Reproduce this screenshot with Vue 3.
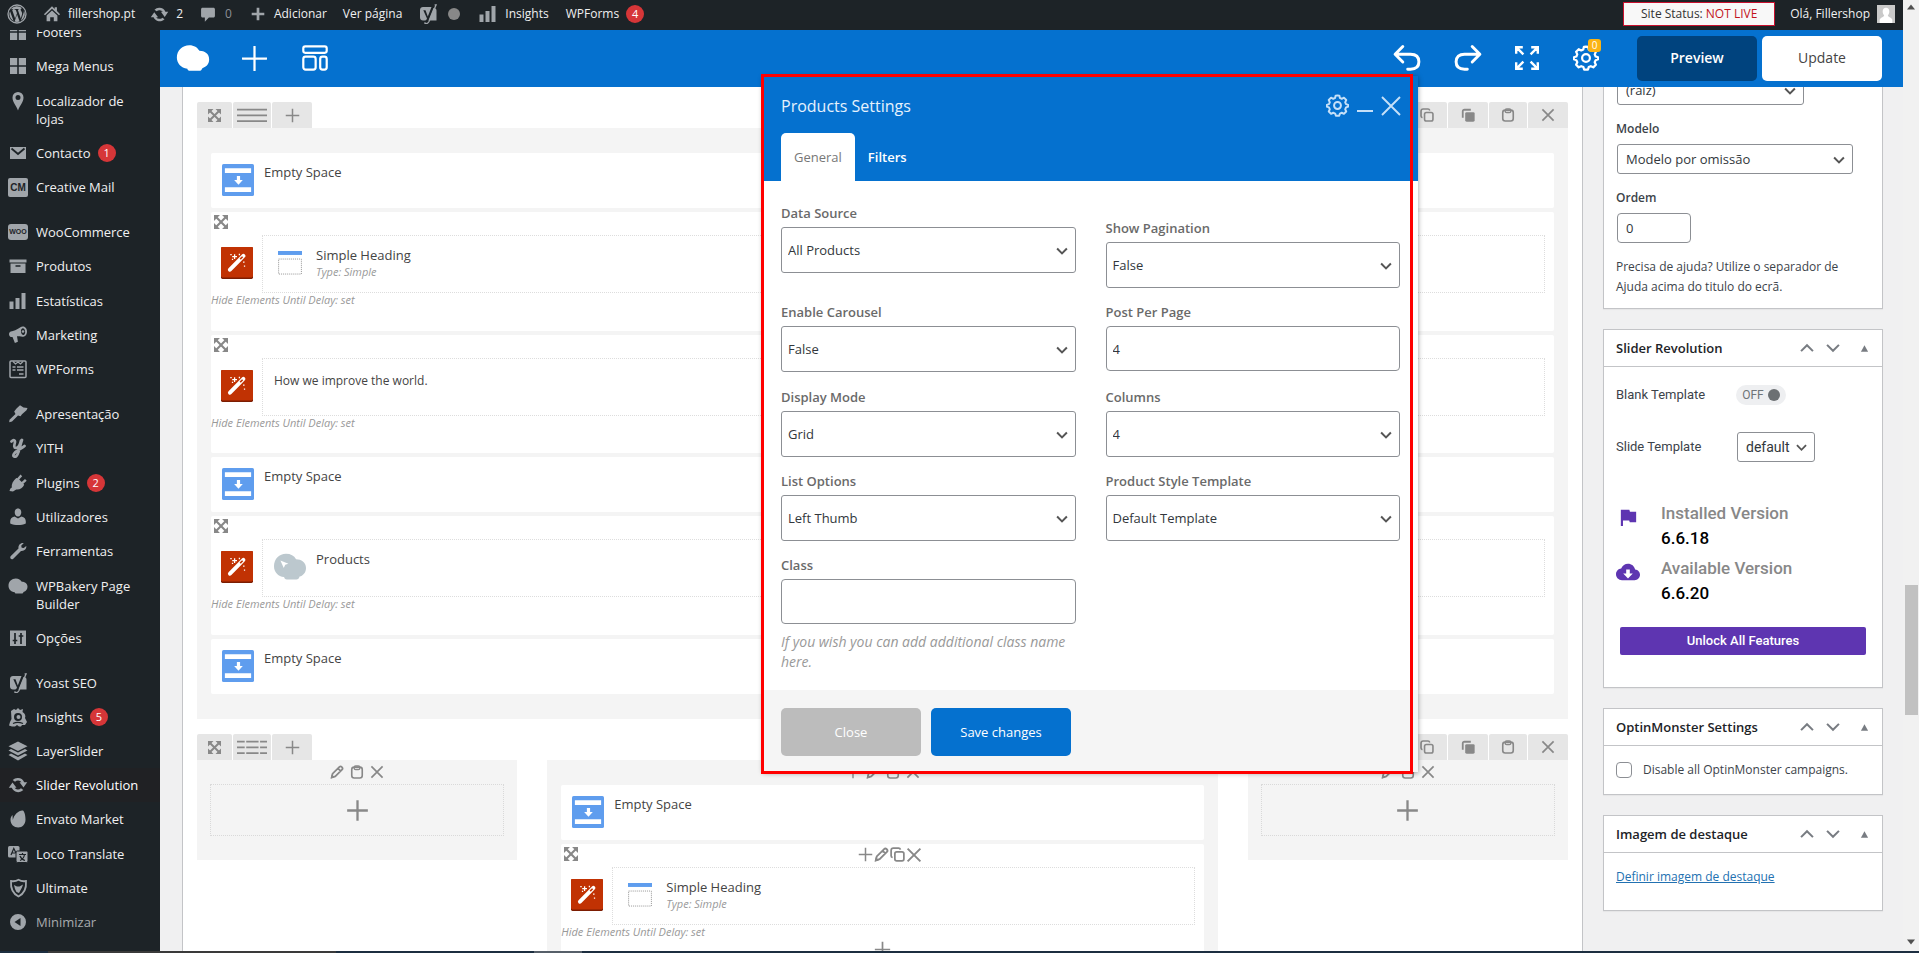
<script setup>
import { h, ref } from 'vue'

const glyphs = {
  wp: '<circle cx="10" cy="10" r="9" fill="none" stroke="currentColor" stroke-width="1.3"/><path fill="currentColor" d="M3 7.2l3.6 9.8A7.8 7.8 0 0 1 3 7.2zM10.1 10.6l2.5 6.9a7.8 7.8 0 0 1-5 .1zM16.9 6.3a7.8 7.8 0 0 1-3 10.4l2.4-6.9c.5-1.300.7-2.500.6-3.500zM3.700 5.200A7.800 7.800 0 0 1 15.200 4.300c-1.200 0-1.800 1-1.400 2 .6 1.200 1.800 2.200 1.100 4.500l-1.100 3.600-3-8.700 1-.1V5l-4.200.1v.6l1.100.1 1.300 3.500-1.900 5.300-3-8.800 1-.1V5z"/>',
  home: '<path fill="currentColor" d="M10 1.500l3 2.900V2.500h2.500v4.300l3.500 3.400-1.300 1.300L10 4.300 2.300 11.500 1 10.200zM10 6l6 5.600V18h-4v-4.500H8V18H4v-6.400z"/>',
  refresh: '<path fill="currentColor" d="M10 3c2.800 0 5.200 1.600 6.200 4.200h3L15.500 12.500l-4-5.300h2A4.300 4.300 0 0 0 7 6.700L4.700 5A7 7 0 0 1 10 3zM4.500 7.500l4 5.300h-2a4.300 4.300 0 0 0 6.500.5l2.300 1.700A7 7 0 0 1 3.800 12.800h-3z"/>',
  comment: '<path fill="currentColor" d="M4 3h12c1 0 1.700.7 1.700 1.700v7.600c0 1-.7 1.700-1.700 1.700h-5l-4.500 4.500V14H4c-1 0-1.700-.7-1.700-1.700V4.700C2.300 3.700 3 3 4 3z"/>',
  plusBold: '<path fill="currentColor" d="M8.500 3h3v5.500H17v3h-5.500V17h-3v-5.500H3v-3h5.500z"/>',
  yoast: '<path fill="currentColor" d="M5 3h8.500L9.800 12.500 7.500 6.300H5.300L9 14.500c-.5 1.500-1.300 2-2.500 2H5c-1.700 0-3-1.200-3-3V6c0-1.700 1.300-3 3-3z"/><path fill="currentColor" d="M15.500 4H16c1.400 0 2.500 1 2.500 2.500v10h-8z"/><path fill="none" stroke="currentColor" stroke-width="1.300" d="M16.600.8h1.500L11 17.500c-.8 1.700-2 2.400-4 2.200v-1.500"/>',
  bars: '<path fill="currentColor" d="M1.500 10.500h4V18h-4zM7.500 7h4v11h-4zM13.500 2h4v16h-4z"/>',
  grid: '<path fill="currentColor" d="M2 2h7.200v7.200H2zM10.800 2H18v7.200h-7.200zM2 10.800h7.200V18H2zM10.800 10.800H18V18h-7.200z"/>',
  pin: '<path fill="currentColor" fill-rule="evenodd" d="M10 1a5.500 5.500 0 0 1 5.500 5.500C15.500 11 12 14 10 19.500 8 14 4.500 11 4.500 6.500A5.500 5.500 0 0 1 10 1zm0 3a2.500 2.500 0 1 0 0 5 2.500 2.500 0 0 0 0-5z"/>',
  mail: '<path fill="currentColor" d="M2 4h16v12H2z"/><path d="M3.500 5.500L10 11l6.500-5.500" fill="none" stroke="#1d2327" stroke-width="1.800"/>',
  archive: '<path fill="currentColor" d="M1.500 3.500h17v3h-17zM2.500 7.500h15v9.500h-15z"/><path d="M7.500 10h5" stroke="#1d2327" stroke-width="1.500"/>',
  megaphone: '<path fill="currentColor" fill-rule="evenodd" d="M14.500 1.500c2.500-.5 4.500 2 4.500 5s-1.800 5.300-3.800 5.200c-1 0-3.600-.7-6.200-.5l.9 5.600-3 1.200-2.400-6C2.500 12.500 1 11 1 9.200 1 7.500 2 6.500 4 6.200c4.500-.7 8-4.300 10.500-4.700zm.2 1.800c-1.300.4-2 1.900-1.700 3.700.4 2 1.500 3.200 2.700 2.900 1.200-.3 1.700-2 1.400-3.700-.3-1.800-1.300-3.100-2.400-2.900z"/><circle cx="15" cy="6.500" r="1.300" fill="currentColor"/>',
  form: '<rect x="2" y="2" width="16" height="16.500" rx="1" fill="none" stroke="currentColor" stroke-width="1.500"/><path d="M5 2.500l2.500 2.500L10 3l2.500 2L15 2.500" fill="none" stroke="currentColor" stroke-width="1.200"/><path d="M4.500 8h3M9 8h6.500M4.500 11h3M9 11h6.500M11 15h4.500" stroke="currentColor" stroke-width="1.500"/>',
  brush: '<path fill="currentColor" d="M8.500 4.500L12 1.200l3.500 2.300 4 .5-1 2.300-4.500 4-1.500 2L10 11.500 4 17.500l-2.800.8.300-2.500L7.500 10 6.200 7.500z"/>',
  yith: '<path fill="none" stroke="currentColor" stroke-width="2.700" stroke-linecap="round" stroke-linejoin="round" d="M3.500 3.500C6 1 7.500 2.500 6.800 5c-.8 3-.8 5 1 5 2.200 0 4.200-3 5.200-7.500M14 2c-1.500 4-2 8-3.500 12-1 3.500-3 5.500-4.500 4.500-1.500-1.200 0-4 4.500-6.500 2.500-1.400 4.500-2.500 6-4"/>',
  plug: '<path fill="currentColor" d="M12.500 1.500l1.700 1.700-3 3.300 2.500 2.500 3.300-3 1.700 1.700-3.300 3.100.8.900c-1.500 3.300-4.500 5.300-8 4.800L5 18.500 1.500 18l.7-2.200 1.600-1.300C3.300 11 5 8 8.300 5l1 .3z"/>',
  user: '<path fill="currentColor" d="M10 1.500c2 0 3.300 1.500 3.300 3.700S12 9.500 10 9.500 6.700 7.500 6.700 5.200 8 1.500 10 1.500zM6.500 9.500L10 11.500l3.500-2c3 .7 4.300 2.300 4.300 5v2c-4.500 2-11 2-15.600 0v-2c0-2.700 1.300-4.300 4.300-5z"/>',
  wrench: '<path fill="currentColor" d="M18.300 5c.3 3-2 5.300-5.300 4.900L5.300 17.800c-1.800 1.500-4-.5-2.700-2.500L10.500 7.500C10 4 12.500 1.500 15.800 2l-2.600 2.700.5 2 2 .4z"/>',
  bakery: '<path fill="currentColor" d="M7.800 2.500c3 0 4.700 1.300 6 3.300 3 0 5.700 1.700 5.700 5 0 2.700-1.500 4.500-4 5.200-.3 1-1 1.500-1.800 1.500H8.200c-.8 0-1.400-.4-1.500-1.200C2.800 15.800.5 13 .5 9.700.5 5.500 3.800 2.500 7.800 2.500z"/>',
  sliders: '<path fill="currentColor" d="M2 2.500h16V18H2z"/><path d="M7 5v11M13 5v11M4.700 12.500h4.600M10.700 8h4.600" stroke="#1d2327" stroke-width="1.700"/>',
  insights: '<path fill="currentColor" fill-rule="evenodd" d="M3 4l3-2 2 1 2-2 2 2 3-1-.5 3C17 6.500 18 9 17 11l2 4-2 3h-3l-1 1.500h-2L9 18l-2 1.500H4L1 18.500 2 15l1.500-3zM10 6a4 4 0 1 0 0 8 4 4 0 0 0 0-8zm.5 2a2 2 0 1 1 0 4 2 2 0 0 1 0-4z"/><path d="M5 16.500c3-1.500 6.500-1.500 10 0" fill="none" stroke="#1d2327" stroke-width="1.300"/>',
  layers: '<path fill="currentColor" d="M10 .5l9.500 4.700L10 10 .5 5.200zM3 8l7 3.500L17 8l2.500 1.500L10 14.500.5 9.500zM3 12.500l7 3.500 7-3.500 2.500 1.500L10 19.500.5 14z"/>',
  leaf: '<path fill="currentColor" d="M14.800 1.500c1.500.5 2.700 4.500 2.700 9 0 4.700-3 8-7.300 8C6 18.500 2.500 15.500 2.500 11c0-2 .7-3.700 2-5l.3 5C6 5.500 11 1 14.800 1.500z"/>',
  loco: '<rect x="0" y="2" width="11.500" height="11.500" rx="1.500" fill="currentColor"/><rect x="8" y="7" width="12" height="11.500" rx="1.500" fill="currentColor" stroke="#1d2327"/><path d="M3 11l2.800-6.500L8 9M3.500 9h4M11 10.500h7M14.500 9v1.500M12 16.500c2.500-1 4-3 4.500-6M12 12c1 2.500 3 4 5 4.500" fill="none" stroke="#1d2327" stroke-width="1.200"/>',
  shield: '<path d="M10.500 1.800c2.500 1.400 5 1.700 7.500 1.200.5 7-1.500 12.500-7.500 15.500C4.500 15.500 2.500 10 3 3c2.500.5 5 .2 7.500-1.200z" fill="none" stroke="currentColor" stroke-width="1.800"/><path fill="currentColor" d="M6 7l3 1.500h2.500L15 6.500l-1 3-3 5.500-2.500-1-1.500-3z"/>',
  collapse: '<path fill="currentColor" fill-rule="evenodd" d="M10 2a8 8 0 1 1 0 16 8 8 0 0 1 0-16zm2.500 4L6.500 10l6 4z"/>',
  move: '<path fill="currentColor" d="M0 0h8.500L0 8.500zM20 0v8.500L11.500 0zM0 20v-8.500L8.500 20zM20 20h-8.500l8.500-8.500z"/><path d="M3 3l14 14M17 3L3 17" stroke="currentColor" stroke-width="3"/>',
  plus: '<path d="M10 1v18M1 10h18" stroke="currentColor" stroke-width="2" fill="none"/>',
  plusWide: '<path d="M10 .5v19M.5 10h19" stroke="currentColor" stroke-width="1.800" stroke-linecap="round" fill="none"/>',
  close: '<path d="M2 2l16 16M18 2L2 18" stroke="currentColor" stroke-width="2.400" fill="none"/>',
  closeThin: '<path d="M1 1l18 18M19 1L1 19" stroke="currentColor" stroke-width="1.900" fill="none"/>',
  pencil: '<path d="M2.500 17.500l1.200-5L13.500 2.800c1-1 2.500-.8 3.500.2s1.200 2.500.2 3.500L7.500 16.300zM11.500 5l3.500 3.500" fill="none" stroke="currentColor" stroke-width="2.500"/><path d="M1 19.500l1.200-6 4.300 4.500z" fill="currentColor"/>',
  clipboard: '<rect x="2.500" y="3" width="15" height="15.500" rx="3.500" fill="none" stroke="currentColor" stroke-width="2.300"/><rect x="6" y="1.500" width="8" height="5" rx="2" fill="none" stroke="currentColor" stroke-width="2"/>',
  copy: '<rect x="6.500" y="6.500" width="12" height="12" rx="2.500" fill="none" stroke="currentColor" stroke-width="2.300"/><path d="M3.500 14C2 13.500 1.500 12.700 1.500 11.500v-7c0-2 1-3 3-3h7c1.300 0 2 .6 2.500 2" fill="none" stroke="currentColor" stroke-width="2.300"/>',
  copyFill: '<rect x="6" y="6" width="13.500" height="13.500" rx="2" fill="currentColor"/><path d="M2.500 14V5c0-1.500 1-2.500 2.500-2.500h9" fill="none" stroke="currentColor" stroke-width="2.600"/>',
  undo: '<path d="M7 1.800L1.500 7.300 7 12.800M2 7.300h10.500c3.800 0 6 2 6 5.400S16.300 18 12.500 18h-2" fill="none" stroke="currentColor" stroke-width="2.100" stroke-linecap="round" stroke-linejoin="round"/>',
  redo: '<path d="M13 1.800l5.500 5.500L13 12.800M18 7.300H7.500c-3.800 0-6 2-6 5.400S3.700 18 7.500 18h2" fill="none" stroke="currentColor" stroke-width="2.100" stroke-linecap="round" stroke-linejoin="round"/>',
  full: '<path d="M1 6.500V1h5.500M1 1L7 7M13.500 1H19v5.500M19 1L13 7M1 13.500V19h5.500M1 19L7 13M13.500 19H19v-5.500M19 19L13 13" fill="none" stroke="currentColor" stroke-width="2"/>',
  gear: '<path d="M10 1.200l1.600.2.500 2 1.600.8 1.900-1 2 2-.9 2 .7 1.600 1.900.6v1.600l-1.900.7-.7 1.600.9 1.900-2 2-1.900-.9-1.600.7-.6 1.900H8.600L8 17l-1.700-.7-1.900.9-2-2 .9-1.900-.7-1.600-1.900-.7V9.400l1.900-.6.7-1.600-.9-2 2-2 1.900 1 1.600-.8.500-2z" fill="none" stroke="currentColor" stroke-width="1.700" stroke-linejoin="round"/><circle cx="10" cy="10" r="3" fill="none" stroke="currentColor" stroke-width="1.700"/>',
  template: '<g fill="none" stroke="currentColor" stroke-width="1.700"><rect x="1" y="1" width="18" height="5" rx="1.500"/><rect x="1" y="9" width="9.500" height="10" rx="1.800"/><rect x="14" y="9" width="5" height="10" rx="1.800"/></g>',
  chevron: '<path d="M3 6.500l7 7 7-7" fill="none" stroke="currentColor" stroke-width="2.800"/>',
  up: '<path d="M1.500 14.500L10 6l8.500 8.500" fill="none" stroke="currentColor" stroke-width="2.900"/>',
  down: '<path d="M1.500 5.500L10 14l8.500-8.500" fill="none" stroke="currentColor" stroke-width="2.900"/>',
  tri: '<path d="M10 3l8 14H2z" fill="currentColor"/>',
  triDown: '<path d="M2 5h16l-8 10z" fill="currentColor"/>',
  triUp: '<path d="M2 15h16L10 5z" fill="currentColor"/>',
  space: '<rect width="20" height="20" rx="1" fill="#5f9dee"/><path d="M1.800 2.600h16.400v3H1.800zM1.800 14.500h16.400v3H1.800zM9.300 7.500h2V10h1.700l-2.700 3-2.700-3h1.700z" fill="#fff"/>',
  wand: '<rect width="20" height="20" rx=".9" fill="#7c1d02"/><rect width="20" height="19" rx=".9" fill="#c13203"/><path d="M5.600 14.200l6-6.200 2.400-2.400" stroke="#fff" stroke-width="2.500" stroke-linecap="round"/><path d="M12 7.600l1.500-1.500" stroke="#c13203" stroke-width="1"/><path d="M8.500 4.500v3M7 6h3M11.500 4.200v1M5.800 4.700h.9M6.800 7.800h.8M13.800 9.500h.9M14.300 12h.8" stroke="#fff" stroke-width=".8"/>',
  heading: '<path fill="#5f9dee" d="M0 0h20v3.300H0z"/><rect x=".5" y="6.700" width="19" height="12.500" fill="none" stroke="#999" stroke-width=".8" stroke-dasharray=".9 .8"/>',
  products: '<path fill="#bcc8ce" d="M7.500 1.700c3 0 5 1.200 6.300 3.400 3.200 0 6.200 2 6.200 5.500 0 2.800-1.700 4.700-4 5.400-.3 1.200-1 1.800-2 1.800H8c-1 0-1.500-.5-1.700-1.500C2.500 15.800 0 13.200 0 9.500 0 5 3.300 1.700 7.500 1.700z"/><path d="M4 6l5 2-2 .6-.9 2z" fill="#fff"/>',
  flag: '<path fill="currentColor" d="M1 1h10l.7 2.200H19v12.500h-7.500l-.7-2.200H3.500V20H1z"/>',
  cloud: '<path fill="currentColor" fill-rule="evenodd" d="M10 3.200c3 0 5.300 2 5.900 4.700 2.400.2 4.100 2 4.100 4.400 0 2.500-2 4.500-4.500 4.500H5c-2.900 0-5-2.200-5-4.900 0-2.600 2-4.600 4.300-4.800C5.400 4.700 7.500 3.200 10 3.200zM8.500 8v3.200H6L10 15.500l4-4.300h-2.500V8z"/>',
  avatar: '<rect width="20" height="20" fill="#c9c9c9"/><path fill="#fff" d="M10 3c2.300 0 3.700 1.800 3.700 4.200 0 2-.8 3.400-1.700 4.300.3 2 3.500 2.400 5 4.500V20H3v-4c1.500-2.100 4.700-2.500 5-4.500-.9-.9-1.700-2.300-1.700-4.300C6.300 4.800 7.700 3 10 3z"/>',
  lines: '<path d="M0 6h40M0 13.500h40M0 21h40" stroke="currentColor" stroke-width="2.400"/>',
  linesCols: '<path d="M0 6h10M12 6h16M30 6h10M0 13.500h10M12 13.500h16M30 13.500h10M0 21h10M12 21h16M30 21h10" stroke="currentColor" stroke-width="2.400"/>',
}
const wide = ['lines', 'linesCols']
const Ico = (p) => h('svg', {
  viewBox: wide.includes(p.n) ? '0 0 40 26' : '0 0 20 20',
  width: wide.includes(p.n) ? p.s * 40 / 26 : p.s, height: p.s, 'aria-hidden': 'true', innerHTML: glyphs[p.n],
})
Ico.props = ['n', 's']

const menu = [
  { t: 'Footers', i: 'grid' }, { t: 'Mega Menus', i: 'grid', tall: true }, { t: 'Localizador de lojas', i: 'pin' },
  { t: 'Contacto', i: 'mail', b: 1 }, { t: 'Creative Mail', tag: 'CM', gap: true },
  { t: 'WooCommerce', tag: 'woo' }, { t: 'Produtos', i: 'archive', tall: true }, { t: 'Estatísticas', i: 'bars' },
  { t: 'Marketing', i: 'megaphone' }, { t: 'WPForms', i: 'form', gap: true },
  { t: 'Apresentação', i: 'brush' }, { t: 'YITH', i: 'yith', tall: true }, { t: 'Plugins', i: 'plug', b: 2 },
  { t: 'Utilizadores', i: 'user' }, { t: 'Ferramentas', i: 'wrench', tall: true }, { t: 'WPBakery Page Builder', i: 'bakery' },
  { t: 'Opções', i: 'sliders', gap: true },
  { t: 'Yoast SEO', i: 'yoast' }, { t: 'Insights', i: 'insights', b: 5 }, { t: 'LayerSlider', i: 'layers' },
  { t: 'Slider Revolution', i: 'refresh', active: true }, { t: 'Envato Market', i: 'leaf', tall: true },
  { t: 'Loco Translate', i: 'loco' }, { t: 'Ultimate', i: 'shield' }, { t: 'Minimizar', i: 'collapse', dim: true },
]
const elements = [
  { k: 'space' }, { k: 'heading' }, { k: 'text' }, { k: 'space' }, { k: 'products' }, { k: 'space' },
]
const rowTools = [
  { n: 'copy', c: 't40' }, { n: 'copyFill', c: 't40' }, { n: 'clipboard', c: 't38' }, { n: 'close', c: 't40' },
]
const left = [
  { id: 'source', l: 'Data Source', v: 'All Products' },
  { id: 'carousel', l: 'Enable Carousel', v: 'False' },
  { id: 'mode', l: 'Display Mode', v: 'Grid' },
  { id: 'list', l: 'List Options', v: 'Left Thumb' },
]
const right = [
  { id: 'pagination', l: 'Show Pagination', v: 'False' },
  { id: 'perpage', l: 'Post Per Page', v: '4', input: true },
  { id: 'columns', l: 'Columns', v: '4' },
  { id: 'template', l: 'Product Style Template', v: 'Default Template' },
]
const perPage = ref('4')
const cssClass = ref('')
const order = ref('0')
</script>

<template>
  <div class="screen">
    <div class="browser">
      <div class="page">
        <header class="adminbar">
          <a href="#" class="wp"><Ico n="wp" :s="20" /></a>
          <a href="#" class="site"><Ico n="home" :s="18" />fillershop.pt</a>
          <a href="#" class="upd"><Ico n="refresh" :s="19" />2</a>
          <a href="#" class="com"><Ico n="comment" :s="18" /><span class="dim">0</span></a>
          <a href="#" class="add"><Ico n="plusBold" :s="18" />Adicionar</a>
          <a href="#" class="view">Ver página</a>
          <a href="#" class="seo"><Ico n="yoast" :s="20" /><i class="dot"></i></a>
          <a href="#" class="ins"><Ico n="bars" :s="20" />Insights</a>
          <a href="#" class="forms">WPForms <b class="badge">4</b></a>
          <a href="#" class="status">Site Status: <em>NOT LIVE</em></a>
          <a href="#" class="hello">Olá, Fillershop<Ico n="avatar" :s="18" /></a>
        </header>

        <div class="body">
          <nav class="side">
            <ul>
              <li v-for="m in menu" :key="m.t" :class="{ gap: m.gap, tall: m.tall, active: m.active, dim: m.dim }">
                <a href="#">
                  <span class="mi">
                    <span v-if="m.tag" class="tag" :class="m.tag">{{ m.tag }}</span>
                    <Ico v-else :n="m.i" :s="20" />
                  </span>
                  <span class="mt">{{ m.t }}</span>
                  <b v-if="m.b" class="badge">{{ m.b }}</b>
                </a>
              </li>
            </ul>
          </nav>

          <div class="work">
            <div class="vcbar">
              <a href="#" class="logo" aria-label="WPBakery">
                <Ico n="bakery" :s="34" />
              </a>
              <button aria-label="Add element"><Ico n="plusWide" :s="25" /></button>
              <button aria-label="Templates"><Ico n="template" :s="26" /></button>
              <div class="vcright">
                <button aria-label="Undo"><Ico n="undo" :s="28" /></button>
                <button aria-label="Redo"><Ico n="redo" :s="28" /></button>
                <button aria-label="Full screen"><Ico n="full" :s="24" /></button>
                <button aria-label="Settings" class="gearbtn"><Ico n="gear" :s="26" /><span>0</span></button>
              </div>
              <button class="preview">Preview</button>
              <button class="update">Update</button>
            </div>

            <div class="columns">
              <main class="canvas">
                <section>
                  <div class="tools">
                    <button class="t35" aria-label="Move"><Ico n="move" :s="13" /></button>
                    <button class="t38" aria-label="Layout"><Ico n="lines" :s="20" /></button>
                    <button class="t40" aria-label="Add"><Ico n="plus" :s="15" /></button>
                    <span class="grow"></span>
                    <button v-for="t in rowTools" :key="t.n" :class="t.c" :aria-label="t.n"><Ico :n="t.n" :s="14" /></button>
                  </div>
                  <div class="rowbody">
                    <template v-for="(e, k) in elements" :key="k">
                      <div v-if="e.k === 'space'" class="el space"><Ico n="space" :s="32" /><span>Empty Space</span></div>
                      <div v-else class="el inner" :class="e.k">
                        <div class="ctl"><Ico n="move" :s="14" /></div>
                        <div class="line">
                          <Ico class="wand" n="wand" :s="32" />
                          <div class="dotted">
                            <template v-if="e.k === 'heading'">
                              <Ico class="hico" n="heading" :s="24" />
                              <div><p>Simple Heading</p><small>Type: Simple</small></div>
                            </template>
                            <p v-else-if="e.k === 'text'" class="solo">How we improve the world.</p>
                            <template v-else><Ico class="pico" n="products" :s="32" /><p>Products</p></template>
                          </div>
                        </div>
                        <small class="delay">Hide Elements Until Delay: set</small>
                      </div>
                    </template>
                  </div>
                </section>

                <section>
                  <div class="tools">
                    <button class="t35" aria-label="Move"><Ico n="move" :s="13" /></button>
                    <button class="t38" aria-label="Layout"><Ico n="linesCols" :s="20" /></button>
                    <button class="t40" aria-label="Add"><Ico n="plus" :s="15" /></button>
                    <span class="grow"></span>
                    <button v-for="t in rowTools" :key="t.n" :class="t.c" :aria-label="t.n"><Ico :n="t.n" :s="14" /></button>
                  </div>
                  <div class="cols">
                    <div class="col">
                      <div class="colctl"><Ico n="pencil" :s="14" /><Ico n="clipboard" :s="14" /><Ico n="close" :s="14" /></div>
                      <button class="drop" aria-label="Add element"><Ico n="plus" :s="23" /></button>
                    </div>
                    <div class="col mid">
                      <div class="colctl"><Ico n="plus" :s="14" /><Ico n="pencil" :s="14" /><Ico n="clipboard" :s="14" /><Ico n="close" :s="14" /></div>
                      <div class="el space"><Ico n="space" :s="32" /><span>Empty Space</span></div>
                      <div class="el inner heading">
                        <div class="ctl">
                          <Ico n="move" :s="14" />
                          <span class="center"><Ico n="plus" :s="15" /><Ico n="pencil" :s="15" /><Ico n="copy" :s="15" /><Ico n="close" :s="16" /></span>
                        </div>
                        <div class="line">
                          <Ico class="wand" n="wand" :s="32" />
                          <div class="dotted">
                            <Ico class="hico" n="heading" :s="24" />
                            <div><p>Simple Heading</p><small>Type: Simple</small></div>
                          </div>
                        </div>
                        <small class="delay">Hide Elements Until Delay: set</small>
                        <Ico class="more" n="plus" :s="17" />
                      </div>
                    </div>
                    <div class="col">
                      <div class="colctl"><Ico n="pencil" :s="14" /><Ico n="clipboard" :s="14" /><Ico n="close" :s="14" /></div>
                      <button class="drop" aria-label="Add element"><Ico n="plus" :s="23" /></button>
                    </div>
                  </div>
                </section>
              </main>

              <aside class="meta">
                <div class="box first">
                  <span class="sel parent"><select aria-label="Ascendente"><option>(raiz)</option></select><Ico n="chevron" :s="14" /></span>
                  <label for="model">Modelo</label>
                  <span class="sel model"><select id="model"><option>Modelo por omissão</option></select><Ico n="chevron" :s="14" /></span>
                  <label for="order">Ordem</label>
                  <input id="order" v-model="order" type="text">
                  <p>Precisa de ajuda? Utilize o separador de Ajuda acima do titulo do ecrã.</p>
                </div>

                <div class="box">
                  <div class="bh"><h2>Slider Revolution</h2><Ico n="up" :s="14" /><Ico n="down" :s="14" /><Ico n="tri" :s="9" /></div>
                  <div class="rev">
                    <div class="frow blank"><span>Blank Template</span><button class="toggle" role="switch" aria-checked="false">OFF<i></i></button></div>
                    <div class="frow"><label for="tpl">Slide Template</label>
                      <span class="sel tpl"><select id="tpl"><option>default</option></select><Ico n="chevron" :s="13" /></span></div>
                    <div class="ver inst"><Ico n="flag" :s="17" /><div><span>Installed Version</span><b>6.6.18</b></div></div>
                    <div class="ver"><Ico n="cloud" :s="24" /><div><span>Available Version</span><b>6.6.20</b></div></div>
                    <button class="unlock">Unlock All Features</button>
                  </div>
                </div>

                <div class="box">
                  <div class="bh"><h2>OptinMonster Settings</h2><Ico n="up" :s="14" /><Ico n="down" :s="14" /><Ico n="tri" :s="9" /></div>
                  <div class="check"><input id="om" type="checkbox"><label for="om">Disable all OptinMonster campaigns.</label></div>
                </div>

                <div class="box">
                  <div class="bh"><h2>Imagem de destaque</h2><Ico n="up" :s="14" /><Ico n="down" :s="14" /><Ico n="tri" :s="9" /></div>
                  <div class="feat"><a href="#">Definir imagem de destaque</a></div>
                </div>
              </aside>
            </div>
          </div>
        </div>
      </div>
      <div class="scroll"><Ico n="triUp" :s="10" /><i></i><Ico n="triDown" :s="10" /></div>
    </div>
    <div class="taskbar"><i class="open"></i><i class="task"></i></div>

    <div class="modal" role="dialog" aria-labelledby="mtitle">
      <div class="mhead">
        <div class="mtop">
          <h1 id="mtitle">Products Settings</h1>
          <button aria-label="Options"><Ico n="gear" :s="23" /></button>
          <button aria-label="Minimize" class="min"><i></i></button>
          <button aria-label="Close panel"><Ico n="closeThin" :s="20" /></button>
        </div>
        <div class="tabs"><button class="on">General</button><button>Filters</button></div>
      </div>
      <div class="mbody">
        <div class="fcol">
          <div v-for="f in left" :key="f.id" class="field">
            <label :for="f.id">{{ f.l }}</label>
            <span class="sel"><select :id="f.id"><option>{{ f.v }}</option></select><Ico n="chevron" :s="14" /></span>
          </div>
          <div class="field">
            <label for="cls">Class</label>
            <input id="cls" v-model="cssClass" type="text">
            <p>If you wish you can add additional class name here.</p>
          </div>
        </div>
        <div class="fcol">
          <div v-for="f in right" :key="f.id" class="field">
            <label :for="f.id">{{ f.l }}</label>
            <input v-if="f.input" :id="f.id" v-model="perPage" type="text">
            <span v-else class="sel"><select :id="f.id"><option>{{ f.v }}</option></select><Ico n="chevron" :s="14" /></span>
          </div>
        </div>
      </div>
      <div class="mfoot"><button class="cancel">Close</button><button class="save">Save changes</button></div>
    </div>
    <div class="outline"></div>
  </div>
</template>

<style>
body { margin: 0; overflow: hidden; }
</style>

<style scoped>
* { box-sizing: border-box; }
.screen { position: relative; height: 100vh; display: flex; flex-direction: column; overflow: hidden; background: #f0f0f1; font: 12px/18px "Open Sans", "Noto Sans", sans-serif; color: #3c434a; }
button, input, select { font: inherit; color: inherit; }
button { border: 0; padding: 0; background: none; display: flex; align-items: center; justify-content: center; cursor: pointer; }
a { color: inherit; text-decoration: none; }
p, h1, h2, ul { margin: 0; padding: 0; font-weight: 400; }
svg { flex: none; display: block; }
.browser { flex: 1; min-height: 0; display: flex; }
.page { flex: 1; min-width: 0; display: flex; flex-direction: column; }

.adminbar { position: relative; z-index: 2; height: 30px; flex: none; display: flex; align-items: center; background: #1d2327; color: #f0f0f1; padding: 0 8px 2px 7px; white-space: nowrap; }
.adminbar a { display: flex; align-items: center; gap: 7px; }
.adminbar svg { color: #a0a5aa; }
.adminbar .dim { color: #8c9197; }
.site { margin-left: 16px; }
.upd { margin-left: 15px; }
.com { margin-left: 16px; }
.adminbar .com { gap: 8px; }
.add { margin-left: 17px; }
.view { margin-left: 16px; }
.seo { margin-left: 16px; }
.adminbar .seo { gap: 10px; }
.dot { width: 12px; height: 12px; border-radius: 50%; background: #888; }
.ins { margin-left: 18px; }
.forms { margin-left: 17px; }
.badge { min-width: 18px; height: 18px; border-radius: 9px; background: #d63638; color: #fff; font-size: 11px; line-height: 18px; font-weight: 400; text-align: center; }
.adminbar .status { margin-left: auto; width: 152px; height: 24px; justify-content: center; gap: 3px; border: 1px solid #c8102e; background: #f8f8f8; color: #333; }
.status em { font-style: normal; color: #c3141c; }
.hello { margin-left: 15px; }

.body { flex: 1; min-height: 0; display: flex; }
.side { width: 160px; flex: none; background: #1d2327; color: #f0f0f1; overflow: hidden; font-size: 13px; }
.side ul { list-style: none; margin-top: -15px; }
.side li.gap { margin-bottom: 11px; }
.side li.tall { padding-bottom: 1px; }
.side li.active { background: #202124; color: #fff; }
.side li.dim { color: #a7aaad; }
.side a { display: flex; align-items: flex-start; padding: 8px 12px 8px 7px; }
.mi { width: 22px; height: 18px; flex: none; display: flex; align-items: center; justify-content: center; color: #a0a5aa; margin-right: 7px; }
.mt { font-size: 13px; }
.side .badge { margin-left: 7px; }
.tag { width: 20px; height: 19px; border-radius: 2px; background: #a0a5aa; color: #1d2327; font: 700 10px/19px "Liberation Sans", sans-serif; text-align: center; }
.tag.woo { height: 16px; border-radius: 3px; font-size: 7px; line-height: 16px; text-transform: uppercase; }

.work { flex: 1; min-width: 0; display: flex; flex-direction: column; }
.vcbar { height: 57px; flex: none; display: flex; align-items: center; background: #0571cf; color: #fff; padding: 0 21px 1px 16px; font-size: 14px; position: relative; z-index: 1; }
.logo { margin-right: 32px; }
.vcbar > button + button { margin-left: 35px; }
.vcright { margin-left: auto; display: flex; align-items: center; gap: 33px; margin-right: 38px; }
.gearbtn { position: relative; margin-left: 1px; }
.gearbtn span { position: absolute; right: -2px; top: -6px; width: 13px; height: 13px; border-radius: 3px; background: #fcb414; font-size: 10px; line-height: 13px; }
.vcbar .preview, .vcbar .update { width: 120px; height: 45px; border-radius: 5px; margin: 0; background: #00437e; font-weight: 600; }
.vcbar .update { margin-left: 5px; background: #fff; color: #444; font-weight: 400; }

.columns { flex: 1; min-height: 0; display: flex; overflow: hidden; padding: 0 20px 0 22px; gap: 20px; align-items: flex-start; }
.canvas { flex: 1; min-width: 0; align-self: stretch; background: #fff; border: 1px solid #c3c4c7; border-width: 0 1px; padding: 15px 14px 0; overflow: hidden; color: #444; font-size: 13px; }
.canvas section { margin-bottom: 15px; }
.tools { display: flex; gap: 1px; height: 26px; }
.tools button { background: #e6e6e6; color: #888; border-radius: 2px 2px 0 0; }
.tools .t35 { width: 35px; } .tools .t38 { width: 38px; } .tools .t40 { width: 40px; }
.grow { flex: 1; }
.rowbody { background: #f4f4f4; padding: 25px 14px; display: flex; flex-direction: column; gap: 4px; }
.el { background: #fff; border-radius: 2px; }
.el.space { height: 55px; display: flex; gap: 10px; padding: 11px; }
.el.space span { line-height: 16px; }
.el.inner { height: 119px; }
.el.inner.text { height: 118px; }
.ctl { height: 23px; padding: 3px; color: #888; display: flex; }
.center { flex: 1; display: flex; justify-content: center; gap: 1px; }
.line { display: flex; margin-right: 9px; }
.wand { margin: 12px 9px 0 10px; }
.dotted { flex: 1; height: 58px; border: 1px dotted #ddd; display: flex; padding: 11px; }
.dotted p { line-height: 17px; }
.dotted .solo { font-size: 12px; line-height: 22px; }
.dotted small { display: block; font-size: 11px; line-height: 15px; font-style: italic; color: #999; }
.hico { margin: 4px 14px 0 4px; }
.pico { margin-right: 10px; }
.delay { display: block; font-size: 11px; line-height: 14px; font-style: italic; color: #999; }
.more { margin: 2px auto 0; color: #888; }
.cols { display: flex; margin: 0 -15px; align-items: flex-start; }
.col { flex: 0 0 calc(25% - 30px); margin: 0 15px; min-width: 0; background: #f4f4f4; padding: 0 13px 24px; color: #888; }
.col.mid { flex-basis: calc(50% - 30px); padding: 0 14px; color: #444; display: flex; flex-direction: column; gap: 4px; }
.col.mid .colctl { margin-bottom: -3px; }
.colctl { display: flex; justify-content: center; gap: 6px; height: 24px; padding-top: 5px; color: #888; }
.drop { width: 100%; height: 52px; border: 1px dotted #d9d9d9; color: #888; }

.meta { width: 280px; flex: none; display: flex; flex-direction: column; gap: 20px; }
.box { background: #fff; border: 1px solid #c3c4c7; box-shadow: 0 1px 1px rgba(0, 0, 0, .04); }
.first { margin-top: -20px; padding: 7px 12px 11px; display: flex; flex-direction: column; align-items: flex-start; }
.first label { margin: 14px 0 5px; line-height: 20px; font-weight: 600; }
.first p { margin-top: 14px; line-height: 20px; }
.sel { position: relative; display: block; }
.sel select { appearance: none; width: 100%; height: 100%; border: 1px solid #8c8f94; border-radius: 3px; background: #fff; padding: 0 24px 0 8px; color: #32373c; }
.sel svg { position: absolute; right: 7px; top: calc(50% - 6px); color: #555; pointer-events: none; }
input[type="text"] { border: 1px solid #8c8f94; border-radius: 4px; background: #fff; color: #32373c; padding: 0 8px; }
.first .sel, .first input { height: 30px; margin-left: 1px; font-size: 13px; }
.parent { width: 187px; } .model { width: 236px; } .first input { width: 74px; }
.bh { height: 37px; display: flex; align-items: center; padding: 0 13px 0 12px; border-bottom: 1px solid #c3c4c7; color: #787c82; gap: 12px; }
.bh h2 { flex: 1; font-size: 13px; font-weight: 600; color: #1d2327; }
.bh svg:last-child { margin-left: 8px; }
.rev { padding: 18px 12px 32px; font-family: Roboto, sans-serif; font-size: 13px; }
.frow { display: flex; align-items: center; }
.frow > :first-child { width: 120px; }
.blank { height: 20px; margin-bottom: 27px; }
.toggle { width: 50px; height: 20px; border-radius: 10px; background: #eeeff1; color: #6f7478; gap: 4px; font-size: 12px; }
.toggle i { width: 12px; height: 12px; border-radius: 50%; background: #6c7073; }
.tpl { width: 78px; height: 30px; margin-left: 1px; font-size: 14px; }
.ver { display: flex; color: #5e35b1; margin-top: 5px; }
.ver.inst { margin-top: 39px; }
.ver svg { margin: 4px 21px 0 0; }
.inst svg { margin: 8px 24px 0 4px; }
.ver div { display: flex; flex-direction: column; font-size: 17px; line-height: 25px; font-weight: 500; }
.ver span { color: #888; } .ver b { color: #000; font-weight: 500; }
.unlock { width: calc(100% - 8px); height: 28px; margin: 21px 4px 0; background: #5e35b1; color: #fff; border-radius: 2px; font-weight: 500; }
.check { display: flex; align-items: center; gap: 11px; height: 48px; padding: 0 12px; }
.check input { appearance: none; width: 16px; height: 16px; margin: 0; border: 1px solid #8c8f94; border-radius: 4px; }
.feat { padding: 15px 12px 24px; }
.feat a { color: #2271b1; text-decoration: underline; }

.scroll { width: 16px; flex: none; background: #f1f1f1; color: #505050; display: flex; flex-direction: column; align-items: center; padding: 2px 0 4px; justify-content: space-between; position: relative; }
.scroll i { position: absolute; left: 2px; right: 1px; top: 61.500%; height: 130px; background: #c1c1c1; }
.taskbar { height: 2px; flex: none; background: #1c2e40; display: flex; padding-left: 48px; gap: 198px; }
.open { width: 288px; background: #3a3a3a; } .task { width: 48px; background: #565f69; }

.modal { position: absolute; left: 763px; top: 76px; width: 655px; background: #fff; box-shadow: 0 1px 5px rgba(0, 0, 0, .4); z-index: 3; font-size: 13px; }
.mhead { background: #0571cf; color: #fff; padding: 0 17px 0 18px; }
.mtop { height: 57px; display: flex; align-items: center; color: #c6e0f8; gap: 8px; padding-top: 2px; }
.mtop h1 { flex: 1; font-size: 16px; line-height: 24px; color: #e6f2fd; }
.min i { width: 16px; height: 2px; background: #c6e0f8; margin-top: 10px; }
.tabs { display: flex; height: 48px; }
.tabs button { padding: 0 13px; font-weight: 600; }
.tabs .on { background: #fff; color: #777; font-weight: 400; border-radius: 5px 5px 0 0; }
.mbody { display: grid; grid-template-columns: 1fr 1fr; gap: 30px; padding: 22px 18px 18px; color: #32373c; }
.fcol { display: flex; flex-direction: column; gap: 14px; }
.fcol:last-child { padding-top: 15px; }
.fcol:first-child .field:first-child { margin-bottom: 15px; }
.field:nth-child(2) { margin-bottom: 1px; }
.field label { display: block; line-height: 20px; margin-bottom: 4px; color: #6a6a6a; font-weight: 600; }
.field .sel { height: 46px; }
.field .sel select { padding-left: 6px; }
.field input { display: block; width: 100%; height: 45px; margin-bottom: 1px; padding: 0 6px; }
.field p { margin-top: 8px; font-size: 14px; line-height: 20px; font-style: italic; color: #999; }
.mfoot { height: 82px; background: #f5f5f5; padding: 18px; display: flex; gap: 10px; }
.mfoot button { width: 140px; height: 48px; border-radius: 5px; color: #fff; background: #bcbcbc; }
.mfoot .save { background: #0571cf; }
.outline { position: absolute; z-index: 4; left: 761px; top: 74px; width: 652px; height: 700px; border: 3px solid #f00; pointer-events: none; }
</style>
